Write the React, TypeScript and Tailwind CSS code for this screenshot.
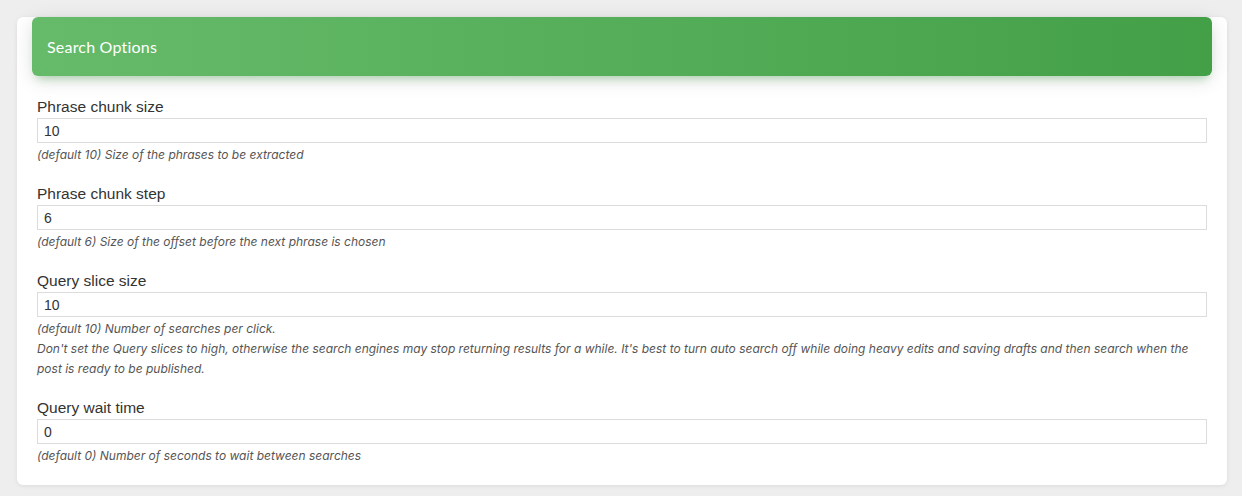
import React from "react";

const FIELDS = [
  { label: "Phrase chunk size", value: "10", help: ["(default 10) Size of the phrases to be extracted"] },
  { label: "Phrase chunk step", value: "6", help: ["(default 6) Size of the offset before the next phrase is chosen"] },
  {
    label: "Query slice size",
    value: "10",
    help: [
      "(default 10) Number of searches per click.",
      "Don't set the Query slices to high, otherwise the search engines may stop returning results for a while. It's best to turn auto search off while doing heavy edits and saving drafts and then search when the post is ready to be published.",
    ],
  },
  { label: "Query wait time", value: "0", help: ["(default 0) Number of seconds to wait between searches"] },
];

export default function App() {
  return (
    <div className="min-h-[496px] bg-[#eeeeee] pt-[37px] pl-[17px] pr-[15px] pb-[11px] font-['Liberation_Sans',Arial,sans-serif]">
      <div className="rounded-md bg-white shadow-[0_1px_4px_0_rgba(0,0,0,0.08)]">
        <div className="mx-[15px] -mt-5 flex h-[59px] items-center rounded-md bg-gradient-to-r from-[#66bb6a] to-[#43a047] px-[15px] shadow-[0_4px_20px_0_rgba(0,0,0,0.12),0_7px_10px_-5px_rgba(76,175,80,0.4)]">
          <h4 className="font-['Lato','Noto_Sans',sans-serif] text-[16px] font-normal tracking-[0.2px] text-white">Search Options</h4>
        </div>
        <div className="px-5 pt-[21px] pb-[19px]">
          {FIELDS.map((f, i) => (
            <div key={f.label} className={i < FIELDS.length - 1 ? "mb-[19px]" : ""}>
              <label className="block text-[15.5px] leading-[20px] text-[#333]">{f.label}</label>
              <input
                readOnly
                value={f.value}
                className="mt-px block h-[25px] w-full border border-[#dcdcdc] bg-white px-[6px] text-[14px] text-[#333] outline-none"
              />
              <div className="mt-[2px] font-['Inter',sans-serif] text-[12px] italic leading-[20px] text-[#555]">
                {f.help.map((h, j) => (
                  <div key={j}>{h}</div>
                ))}
              </div>
            </div>
          ))}
        </div>
      </div>
    </div>
  );
}
